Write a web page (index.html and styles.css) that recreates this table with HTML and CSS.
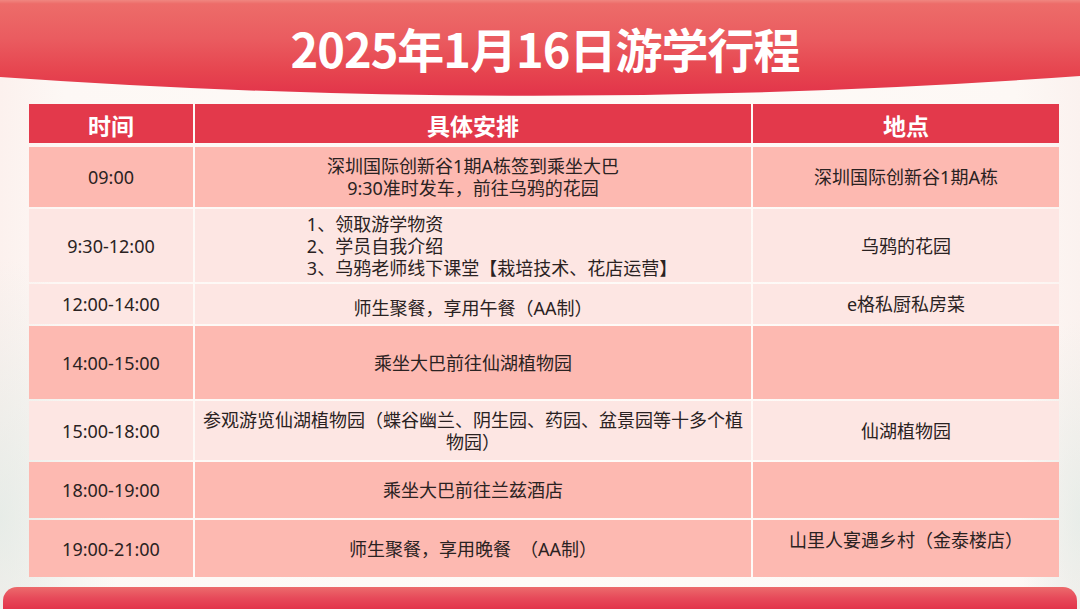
FILE: index.html
```html
<!DOCTYPE html>
<html lang="zh-CN">
<head>
<meta charset="utf-8">
<title>2025年1月16日游学行程</title>
<link rel="stylesheet" href="styles.css">
</head>
<body>
<div class="page">
  <header class="banner">
    <h1 class="title">2025年1月16日游学行程</h1>
  </header>
  <main class="table">
    <div class="row head">
      <div class="cell">时间</div>
      <div class="cell">具体安排</div>
      <div class="cell">地点</div>
    </div>
    <div class="row dark r1">
      <div class="cell">09:00</div>
      <div class="cell">深圳国际创新谷1期A栋签到乘坐大巴<br>9:30准时发车，前往乌鸦的花园</div>
      <div class="cell">深圳国际创新谷1期A栋</div>
    </div>
    <div class="row light r2">
      <div class="cell">9:30-12:00</div>
      <div class="cell list"><div class="list-inner">1、领取游学物资<br>2、学员自我介绍<br>3、乌鸦老师线下课堂【栽培技术、花店运营】</div></div>
      <div class="cell">乌鸦的花园</div>
    </div>
    <div class="row light r3">
      <div class="cell">12:00-14:00</div>
      <div class="cell low">师生聚餐，享用午餐（AA制）</div>
      <div class="cell">e格私厨私房菜</div>
    </div>
    <div class="row dark r4">
      <div class="cell">14:00-15:00</div>
      <div class="cell">乘坐大巴前往仙湖植物园</div>
      <div class="cell"></div>
    </div>
    <div class="row light r5">
      <div class="cell">15:00-18:00</div>
      <div class="cell tight">参观游览仙湖植物园（蝶谷幽兰、阴生园、药园、盆景园等十多个植<br>物园）</div>
      <div class="cell">仙湖植物园</div>
    </div>
    <div class="row dark r6">
      <div class="cell">18:00-19:00</div>
      <div class="cell">乘坐大巴前往兰兹酒店</div>
      <div class="cell"></div>
    </div>
    <div class="row dark r7">
      <div class="cell">19:00-21:00</div>
      <div class="cell">师生聚餐，享用晚餐　（AA制）</div>
      <div class="cell high">山里人宴遇乡村（金泰楼店）</div>
    </div>
  </main>
  <footer class="bottom-bar"></footer>
</div>
</body>
</html>
```
FILE: styles.css
```css
* { box-sizing: border-box; }
html, body { margin: 0; padding: 0; }
body {
  width: 1080px;
  height: 609px;
  overflow: hidden;
  font-family: "Noto Sans", "Noto Sans CJK SC", sans-serif;
  color: #2a2222;
}
.page {
  width: 1080px;
  height: 609px;
  display: flex;
  flex-direction: column;
  background:
    radial-gradient(ellipse 120px 260px at 0% 85%, rgba(214, 232, 226, 0.55), rgba(214, 232, 226, 0) 100%),
    radial-gradient(ellipse 60px 200px at 100% 85%, rgba(214, 232, 226, 0.5), rgba(214, 232, 226, 0) 100%),
    linear-gradient(90deg, #fcf1ee 0%, #fdf8f5 6%, #fefbf8 50%, #fdf8f5 94%, #fbf2ef 100%);
}
.banner {
  height: 96px;
  flex: none;
  background: linear-gradient(180deg, #f08680 0%, #ed6c69 4%, #ea5c60 40%, #e6444f 75%, #e2334a 100%);
  clip-path: path('M0 0 H1080 V76 Q540 115 0 77 Z');
  display: flex;
  justify-content: center;
  padding-top: 24px;
  padding-left: 10px;
}
.title {
  margin: 0;
  font-family: "Noto Sans CJK SC", sans-serif;
  font-weight: 700;
  font-size: 47px;
  line-height: 47px;
  letter-spacing: -1px;
  color: #ffffff;
}
.table {
  margin: 8px 0 0 29px;
  width: 1030px;
  display: flex;
  flex-direction: column;
  gap: 2px;
}
.row {
  display: grid;
  grid-template-columns: 164px 556px 306px;
  column-gap: 2px;
}
.cell {
  display: flex;
  align-items: center;
  justify-content: center;
  text-align: center;
  font-size: 18px;
  line-height: 22px;
}
.head { height: 39px; margin-bottom: 2px; }
.head .cell {
  background: #e3394b;
  color: #ffffff;
  font-family: "Noto Sans CJK SC", sans-serif;
  font-weight: 700;
  font-size: 23px;
  padding-top: 2px;
}
.dark .cell { background: #fdb9b1; }
.light .cell { background: #fde6e3; }
.r1 { height: 60px; }
.r2 { height: 73px; }
.r3 { height: 40px; }
.r4 { height: 73px; }
.r5 { height: 59px; }
.r6 { height: 56px; }
.r7 { height: 57px; }
.list { padding-left: 38px; }
.list-inner { text-align: left; line-height: 22px; }
.tight { line-height: 22px; padding: 0 4px; }
.low { padding-top: 8px; }
.high { padding-bottom: 18px; }
.bottom-bar {
  margin: 10px 3px 0 3px;
  height: 22px;
  flex: none;
  border-radius: 14px 14px 0 0;
  background: linear-gradient(180deg, #ec6b6c 0%, #e74a5a 50%, #e2344a 100%);
}
```
